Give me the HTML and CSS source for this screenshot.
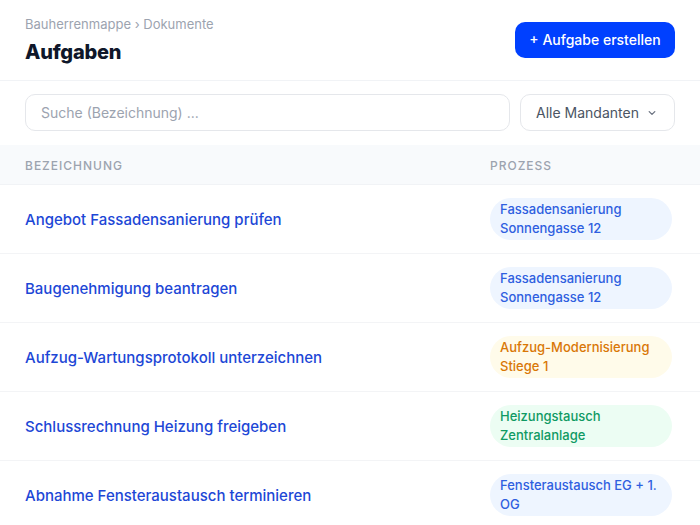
FILE: index.html
```html
<!DOCTYPE html>
<html lang="de">
<head>
<meta charset="utf-8">
<title>Aufgaben</title>
<link rel="stylesheet" href="styles.css">
</head>
<body>
<div class="page">
  <header class="header">
    <div class="titles">
      <div class="crumbs">Bauherrenmappe › Dokumente</div>
      <h1 class="title">Aufgaben</h1>
    </div>
    <button class="btn-primary">+ Aufgabe erstellen</button>
  </header>
  <div class="filters">
    <div class="search">Suche (Bezeichnung) ...</div>
    <div class="select">Alle Mandanten
      <svg class="chev" width="12" height="12" viewBox="0 0 12 12"><path d="M3.2 4.6 L6 7.4 L8.8 4.6" fill="none" stroke="#6b7280" stroke-width="1.3" stroke-linecap="round" stroke-linejoin="round"/></svg>
    </div>
  </div>
  <div class="table">
    <div class="row head">
      <div class="th">Bezeichnung</div>
      <div class="th">Prozess</div>
    </div>
    <div class="row">
      <div class="name">Angebot Fassadensanierung prüfen</div>
      <div><span class="badge blue">Fassadensanierung Sonnengasse 12</span></div>
    </div>
    <div class="row">
      <div class="name">Baugenehmigung beantragen</div>
      <div><span class="badge blue">Fassadensanierung Sonnengasse 12</span></div>
    </div>
    <div class="row">
      <div class="name">Aufzug-Wartungsprotokoll unterzeichnen</div>
      <div><span class="badge amber">Aufzug-Modernisierung Stiege 1</span></div>
    </div>
    <div class="row">
      <div class="name">Schlussrechnung Heizung freigeben</div>
      <div><span class="badge green">Heizungstausch Zentralanlage</span></div>
    </div>
    <div class="row">
      <div class="name">Abnahme Fensteraustausch terminieren</div>
      <div><span class="badge blue">Fensteraustausch EG + 1. OG</span></div>
    </div>
  </div>
</div>
</body>
</html>
```

FILE: styles.css
```css
* { box-sizing: border-box; }
html, body { margin: 0; padding: 0; background: #fff; }
body {
  font-family: Inter, "Noto Sans", "Liberation Sans", sans-serif;
  color: #111827;
  overflow: hidden;
}
.page { width: 700px; }
.header {
  display: flex;
  justify-content: space-between;
  align-items: flex-start;
  padding: 16px 25px 0 25px;
  height: 81px;
  border-bottom: 1px solid #f1f3f6;
}
.crumbs {
  font-size: 13px;
  line-height: 16px;
  color: #9ca3af;
}
.title {
  margin: 8px 0 0 0;
  font-size: 20px;
  line-height: 24px;
  font-weight: 800;
  color: #0f172a;
  letter-spacing: -0.2px;
}
.btn-primary {
  margin-top: 6px;
  width: 160px;
  height: 36px;
  border: none;
  border-radius: 10px;
  background: #0040ff;
  color: #fff;
  font-family: inherit;
  font-size: 14px;
  font-weight: 500;
  padding: 0 0 2px 0;
}
.filters {
  display: flex;
  gap: 10px;
  padding: 13px 25px 14px 25px;
}
.search, .select {
  height: 37px;
  border: 1px solid #e5e7eb;
  border-radius: 10px;
  display: flex;
  align-items: center;
  font-size: 14px;
}
.search {
  flex: 1;
  padding-left: 15px;
  color: #9ca3af;
}
.select {
  width: 155px;
  padding-left: 15px;
  gap: 7px;
  color: #4b5563;
}
.row {
  display: grid;
  grid-template-columns: 1fr 182px;
  column-gap: 25px;
  padding: 13px 28px 13px 25px;
  border-bottom: 1px solid #f3f4f6;
  align-items: center;
}
.row.head {
  background: #f8fafc;
  padding-top: 1px;
  padding-bottom: 0;
  height: 40px;
  border-bottom: 1px solid #f1f3f6;
}
.th {
  font-size: 12px;
  font-weight: 500;
  letter-spacing: 1px;
  text-transform: uppercase;
  color: #9ca3af;
}
.name {
  font-size: 15px;
  font-weight: 500;
  color: #1d47d6;
}
.badge {
  display: block;
  padding: 2px 10px;
  border-radius: 21px;
  font-size: 13px;
  line-height: 19px;
  font-weight: 500;
}
.badge.blue { background: #eef5ff; color: #2f5fe0; }
.badge.amber { background: #fffbea; color: #d97706; }
.badge.green { background: #ecfdf3; color: #0f9a63; }
```
